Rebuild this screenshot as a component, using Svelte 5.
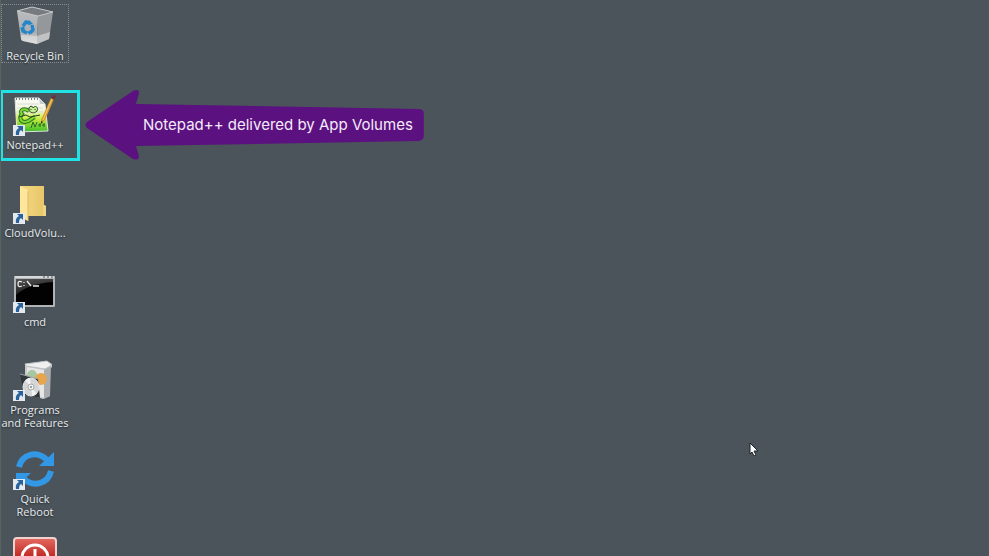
<script>
  const shortcuts = [
    { id: 'recycle', label: 'Recycle Bin', link: false },
    { id: 'notepad', label: 'Notepad++', link: true },
    { id: 'folder', label: 'CloudVolu...', link: true },
    { id: 'cmd', label: 'cmd', link: true },
    { id: 'programs', label: 'Programs and Features', link: true },
    { id: 'reboot', label: 'Quick Reboot', link: true },
    { id: 'power', label: '', link: false }
  ];
</script>

<main class="desktop">
  <nav class="icons" aria-label="Desktop shortcuts">
    {#each shortcuts as item (item.id)}
      <div class="cell">
        <button class="shortcut" class:focused={item.id === 'recycle'} aria-label={item.label || 'Shut down'}>
          <svg class="icon" viewBox="0 0 44 44" aria-hidden="true">
            {#if item.id === 'recycle'}
              <defs>
                <linearGradient id="binLeft" x1="0" y1="0" x2="0" y2="1">
                  <stop offset="0" stop-color="#b9bbbe" /><stop offset=".65" stop-color="#acaeb1" /><stop offset="1" stop-color="#dcdddf" />
                </linearGradient>
              </defs>
              <path d="M4 7 25 12 24 40 10 37Q9 37 8 35Z" fill="url(#binLeft)" />
              <path d="M25 12 40 8 36 35 24 40Z" fill="#95989b" />
              <path d="M24 32 37 28 36 35 24 40Z" fill="#c0c2c4" />
              <path d="M4 7 19 3 40 8 25 12Z" fill="#777b7f" stroke="#c9cbcc" stroke-width="1" />
              <path d="M8 31 24 32V40L10 37Q9 37 8 35Z" fill="#dddfe0" opacity=".6" />
              <g fill="none" stroke="#2386ca" stroke-width="3.4">
                <path d="M10 22 13 18 17 19" />
                <path d="M19 21 20 26 17 29" />
                <path d="M14 29 10 27 9 24" />
              </g>
              <path d="M16 16 20 20 15 21ZM18 26 17 31 14 28ZM7 24 11 22 12 26Z" fill="#2386ca" />
            {:else if item.id === 'notepad'}
              <defs>
                <linearGradient id="page" x1="0" y1="0" x2="0" y2="1">
                  <stop offset="0" stop-color="#fafafa" /><stop offset=".35" stop-color="#f2f6dc" />
                  <stop offset=".6" stop-color="#c8ee42" /><stop offset="1" stop-color="#39bd25" />
                </linearGradient>
              </defs>
              <path d="M2 5H26L32 11 35 38 4 39Z" fill="url(#page)" stroke="#dfe5dc" stroke-width="1" />
              <path d="M26 5 27 11H32Z" fill="#c9cdcb" />
              <path d="M3 6H26" stroke="#777d7c" stroke-width="2" stroke-dasharray="1 2" />
              <path d="M4 11H26M4 15H30M4 19H31" stroke="#dadddc" stroke-width="1" />
              <path d="M16 18C10 14 6 18 9 21C6 24 7 29 12 29C17 29 18 25 22 24" fill="none" stroke="#2f6f1d" stroke-width="4" />
              <path d="M16 18C10 14 6 18 9 21C6 24 7 29 12 29C17 29 18 25 22 24" fill="none" stroke="#7ddb35" stroke-width="2" />
              <path d="M16 17C15 13 20 12 20 15C22 12 26 14 24 18C21 21 17 20 16 17Z" fill="#c5ef94" stroke="#284820" stroke-width="1" />
              <path d="M6 24 13 22 17 24 27 22M18 17V16M22 17V16" fill="none" stroke="#253f1c" stroke-width="1" />
              <path d="M18 35 20 29 22 34 24 29M25 32H28M27 30V34M29 32H32M31 30V34" fill="none" stroke="#276829" stroke-width="1" />
              <path d="M38 5 41 6 32 27 28 31 28 27Z" fill="#d89b31" />
              <path d="M39 6 30 27" stroke="#f8c968" stroke-width="1" />
              <path d="M38 5 40 2 43 3 41 7Z" fill="#6d303e" />
              <path d="M28 28V31L30 29Z" fill="#333" />
            {:else if item.id === 'folder'}
              <defs>
                <linearGradient id="folderFace"><stop stop-color="#f4d982" /><stop offset="1" stop-color="#e7c568" /></linearGradient>
              </defs>
              <path d="M7 5H31V24L33 25V35H11Z" fill="url(#folderFace)" />
              <path d="M30 24H31L33 25V35H30Z" fill="#efd486" />
              <path d="M7 5 15 9V40L7 36Z" fill="#ffe69b" />
              <path d="M15 10V40" stroke="#d9bc68" stroke-width="1" />
            {:else if item.id === 'cmd'}
              <defs>
                <linearGradient id="screenGlow" x1="0" y1="0" x2=".4" y2="1"><stop stop-color="#555" /><stop offset="1" stop-color="#171717" /></linearGradient>
              </defs>
              <rect x="1" y="6" width="41" height="31" rx="1" fill="#b0b4b8" />
              <path d="M2 7H41" stroke="#d6d9da" stroke-width="2" />
              <path d="M30 7H32M34 7H36M38 7H40" stroke="#47505b" stroke-width="1" />
              <rect x="3" y="9" width="37" height="26" fill="#020202" />
              <path d="M3 9H40V12C23 13 10 18 3 25Z" fill="url(#screenGlow)" />
              <path d="M9 12Q5 10 5 14T9 16M11 12V13M11 15V16M14 11 18 16M20 16H26" fill="none" stroke="#ededed" stroke-width="1.3" />
            {:else if item.id === 'programs'}
              <path d="M12 6 34 3 39 6V9L37 11V38L30 41 12 35Z" fill="#c7c9ca" />
              <path d="M14 9 31 12V40L14 34Z" fill="#e5e6e5" />
              <path d="M31 11 38 8 37 38 31 41Z" fill="#a9adaf" />
              <path d="M12 6 34 3 39 7 32 11 13 8Z" fill="#eff0ef" stroke="#bcc0c2" stroke-width="1" />
              <circle cx="19" cy="17" r="5" fill="#a7c7a2" />
              <circle cx="28" cy="21" r="6" fill="#e7a64d" />
              <path d="M7 16 25 21 27 40 11 36Z" fill="#30363b" />
              <path d="M7 16 25 21" stroke="#9aa1a5" stroke-width="1" />
              <ellipse cx="18" cy="29" rx="8" ry="9" fill="#d3d5d6" stroke="#e7e9e9" stroke-width="1" />
              <path d="M18 29 12 22 17 20ZM18 29 24 36 19 38Z" fill="#fff" opacity=".7" />
              <circle cx="18" cy="29" r="3" fill="#f3f3f3" stroke="#a6abad" />
              <circle cx="18" cy="29" r="1" fill="#7b8387" />
            {:else if item.id === 'reboot'}
              <g fill="none" stroke="#3298e6" stroke-width="6">
                <path d="M6 20C9 7 24 3 34 13" />
                <path d="M38 24C35 37 20 41 10 31" />
              </g>
              <path d="M41 5V19H26ZM3 40V26H18Z" fill="#3298e6" />
            {:else}
              <defs>
                <linearGradient id="powerRed" x1="0" y1="0" x2="0" y2="1"><stop stop-color="#e36a61" /><stop offset=".5" stop-color="#bd251f" /><stop offset="1" stop-color="#a91410" /></linearGradient>
              </defs>
              <rect x="1" y="3" width="42" height="40" rx="3" fill="url(#powerRed)" stroke="#f1d1ce" stroke-width="2" />
              <circle cx="22" cy="23" r="13" fill="none" stroke="#fff" stroke-width="3" />
              <path d="M22 14V24" stroke="#fff" stroke-width="3" />
            {/if}
            {#if item.link}
              <rect x="0" y="32" width="12" height="11" fill="#e3e9ee" />
              <path d="M4 33H10V39L8 37Q6 38 6 42H3Q2 37 6 35Z" fill="#2a629c" />
            {/if}
          </svg>
          {#if item.label}<span class="label">{item.label}</span>{/if}
        </button>

        {#if item.id === 'notepad'}
          <div class="highlight"></div>
          <div class="callout">
            <svg class="arrow" viewBox="0 0 340 72" preserveAspectRatio="none" aria-hidden="true">
              <path d="M2 33 48 2Q54 -1 54 4L51 15 334 20Q339 20 339 25V47Q339 51 334 52L51 57 54 67Q54 72 48 70L2 39Q-1 36 2 33Z" fill="#5b1180" />
            </svg>
            <span class="message">Notepad++ delivered by App Volumes</span>
          </div>
        {/if}
      </div>
    {/each}
  </nav>

  <svg class="pointer" viewBox="0 0 10 15" aria-hidden="true">
    <path d="M1 1V12L3 10 5 14 7 13 5 9H9Z" fill="#fff" stroke="#1d2226" stroke-width="1" />
  </svg>
</main>

<style>
  :global(body) {
    margin: 0;
    background: #4b545a;
  }
  .desktop {
    position: relative;
    box-sizing: border-box;
    height: 100vh;
    overflow: hidden;
    background: #4b545a;
    border-left: 1px solid #56635f;
    border-right: 1px solid #465955;
  }
  .icons {
    display: grid;
    grid-template-rows: repeat(6, 1fr) 21px;
    box-sizing: border-box;
    width: 68px;
    height: 100%;
    padding-top: 4px;
  }
  .cell {
    position: relative;
    min-height: 0;
  }
  .shortcut {
    display: flex;
    flex-direction: column;
    align-items: center;
    gap: 1px;
    box-sizing: border-box;
    width: 100%;
    padding: 0;
    border: 0;
    background: none;
    color: #e8ebed;
    font: 11px/13px "Open Sans", "Noto Sans", sans-serif;
    text-shadow: 0 1px 2px #20272c;
  }
  .focused {
    padding-bottom: 1px;
    outline: 1px dotted #858c90;
    outline-offset: -1px;
  }
  .icon {
    display: block;
    flex: none;
    width: 44px;
    height: 44px;
  }
  .label {
    display: block;
    max-width: 68px;
    text-align: center;
  }
  .highlight {
    position: absolute;
    top: -3px;
    left: -1px;
    box-sizing: border-box;
    width: 80px;
    height: 71px;
    border: 3px solid #20e3e5;
  }
  .callout {
    position: absolute;
    top: -4px;
    left: 84px;
    display: flex;
    align-items: center;
    box-sizing: border-box;
    height: 72px;
    padding: 0 12px 0 58px;
    color: #f5eafa;
    font: 15px/20px Inter, "Open Sans", sans-serif;
    white-space: nowrap;
  }
  .arrow {
    position: absolute;
    top: 0;
    left: 0;
    width: 100%;
    height: 100%;
  }
  .message {
    position: relative;
  }
  .pointer {
    position: absolute;
    top: 442px;
    left: 748px;
    width: 10px;
    height: 15px;
  }
</style>
